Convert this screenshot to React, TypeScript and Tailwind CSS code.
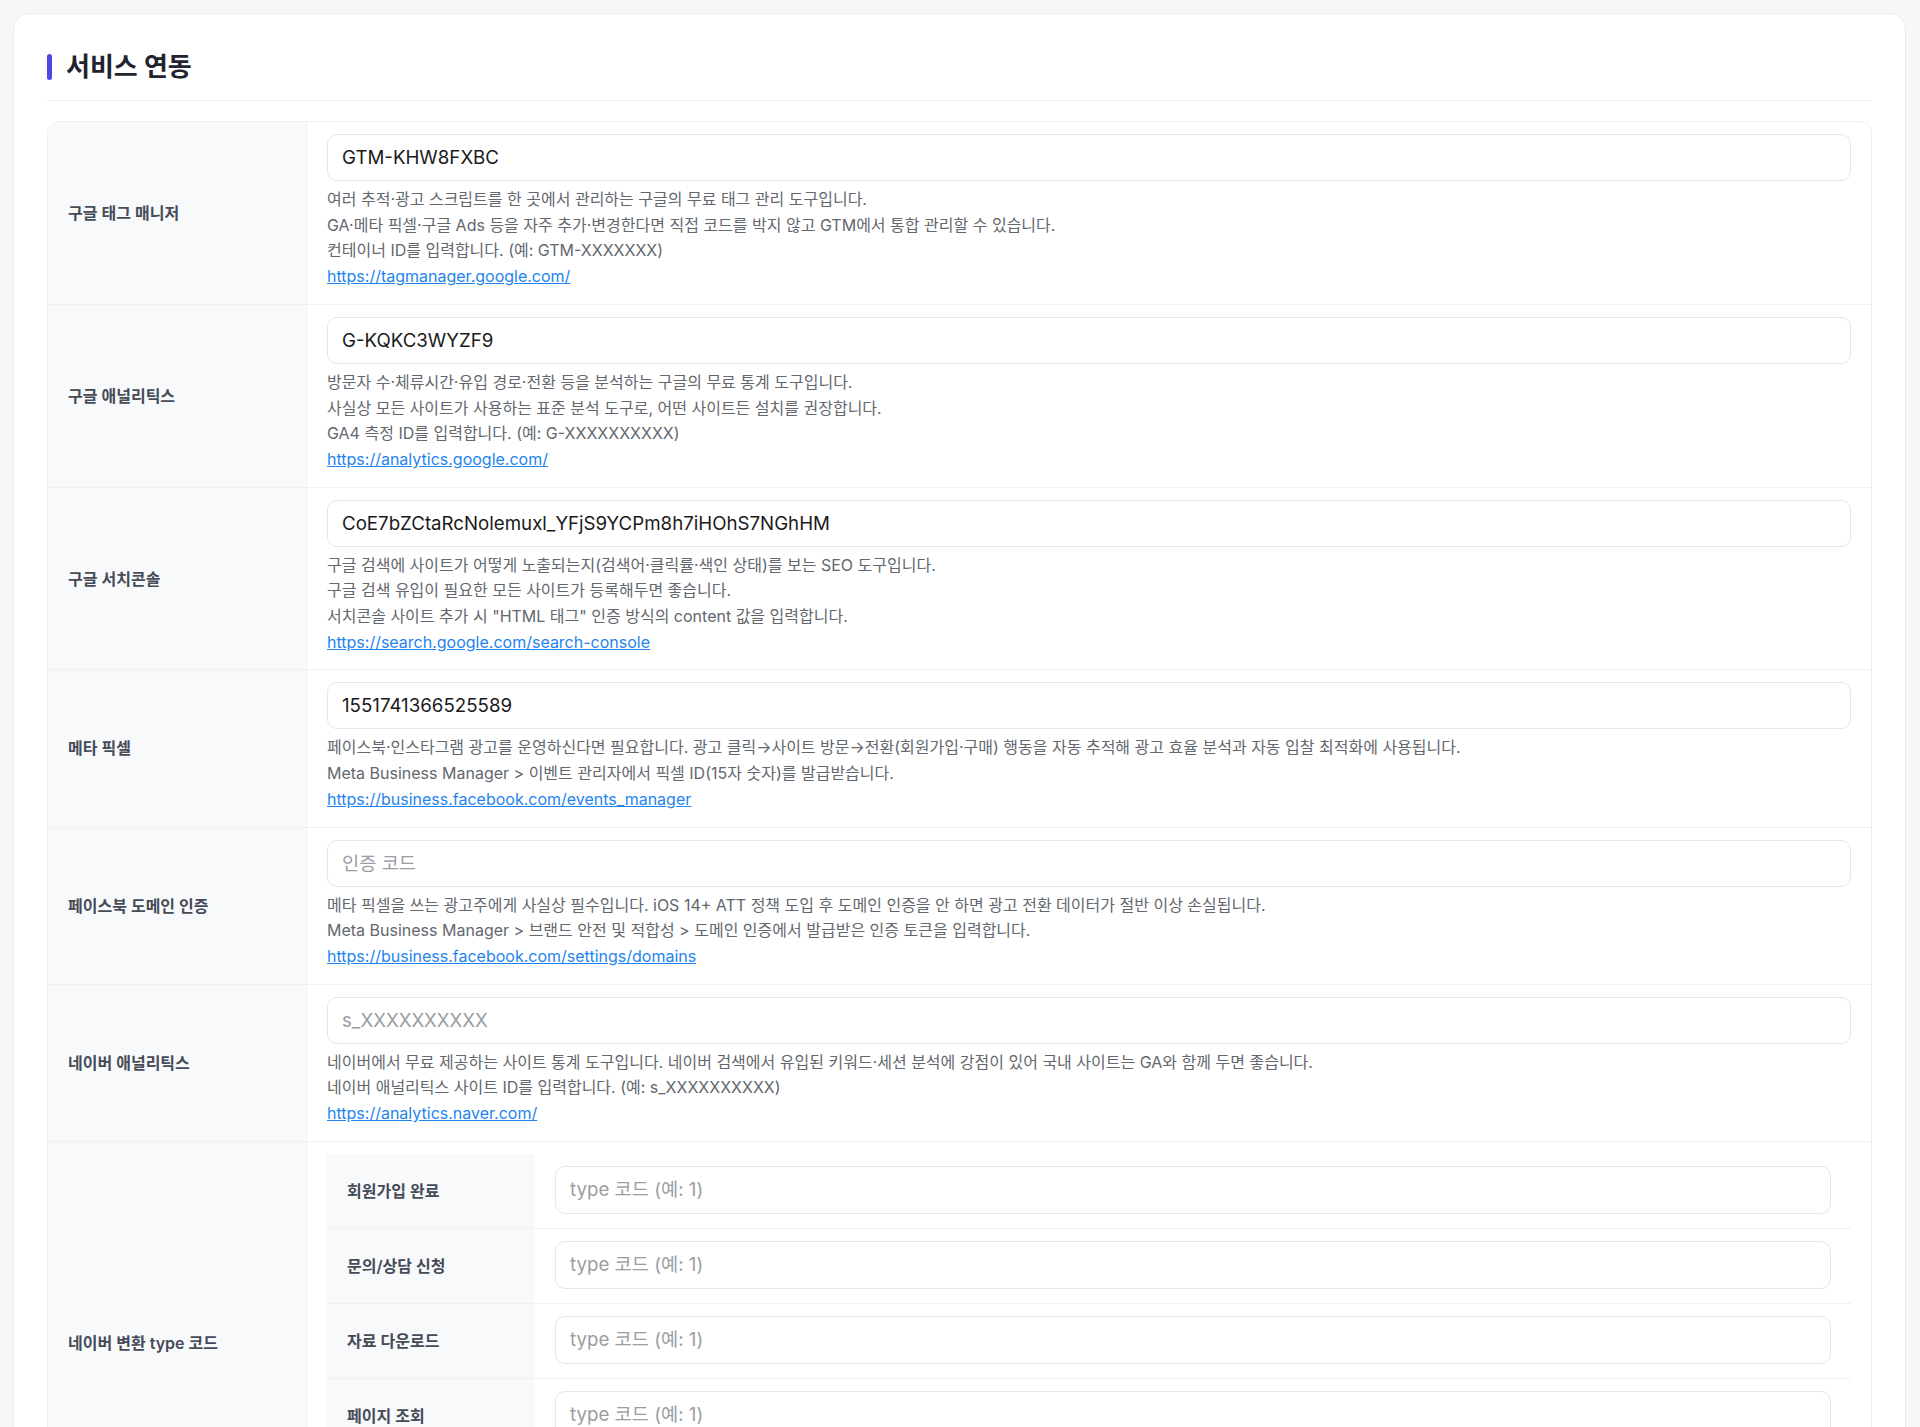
import React from "react";

type Service = {
  label: string;
  value?: string;
  placeholder?: string;
  lines: string[];
  link: string;
};

const services: Service[] = [
  {
    label: "구글 태그 매니저",
    value: "GTM-KHW8FXBC",
    lines: [
      "여러 추적·광고 스크립트를 한 곳에서 관리하는 구글의 무료 태그 관리 도구입니다.",
      "GA·메타 픽셀·구글 Ads 등을 자주 추가·변경한다면 직접 코드를 박지 않고 GTM에서 통합 관리할 수 있습니다.",
      "컨테이너 ID를 입력합니다. (예: GTM-XXXXXXX)",
    ],
    link: "https://tagmanager.google.com/",
  },
  {
    label: "구글 애널리틱스",
    value: "G-KQKC3WYZF9",
    lines: [
      "방문자 수·체류시간·유입 경로·전환 등을 분석하는 구글의 무료 통계 도구입니다.",
      "사실상 모든 사이트가 사용하는 표준 분석 도구로, 어떤 사이트든 설치를 권장합니다.",
      "GA4 측정 ID를 입력합니다. (예: G-XXXXXXXXXX)",
    ],
    link: "https://analytics.google.com/",
  },
  {
    label: "구글 서치콘솔",
    value: "CoE7bZCtaRcNolemuxl_YFjS9YCPm8h7iHOhS7NGhHM",
    lines: [
      "구글 검색에 사이트가 어떻게 노출되는지(검색어·클릭률·색인 상태)를 보는 SEO 도구입니다.",
      "구글 검색 유입이 필요한 모든 사이트가 등록해두면 좋습니다.",
      '서치콘솔 사이트 추가 시 "HTML 태그" 인증 방식의 content 값을 입력합니다.',
    ],
    link: "https://search.google.com/search-console",
  },
  {
    label: "메타 픽셀",
    value: "1551741366525589",
    lines: [
      "페이스북·인스타그램 광고를 운영하신다면 필요합니다. 광고 클릭→사이트 방문→전환(회원가입·구매) 행동을 자동 추적해 광고 효율 분석과 자동 입찰 최적화에 사용됩니다.",
      "Meta Business Manager > 이벤트 관리자에서 픽셀 ID(15자 숫자)를 발급받습니다.",
    ],
    link: "https://business.facebook.com/events_manager",
  },
  {
    label: "페이스북 도메인 인증",
    placeholder: "인증 코드",
    lines: [
      "메타 픽셀을 쓰는 광고주에게 사실상 필수입니다. iOS 14+ ATT 정책 도입 후 도메인 인증을 안 하면 광고 전환 데이터가 절반 이상 손실됩니다.",
      "Meta Business Manager > 브랜드 안전 및 적합성 > 도메인 인증에서 발급받은 인증 토큰을 입력합니다.",
    ],
    link: "https://business.facebook.com/settings/domains",
  },
  {
    label: "네이버 애널리틱스",
    placeholder: "s_XXXXXXXXXX",
    lines: [
      "네이버에서 무료 제공하는 사이트 통계 도구입니다. 네이버 검색에서 유입된 키워드·세션 분석에 강점이 있어 국내 사이트는 GA와 함께 두면 좋습니다.",
      "네이버 애널리틱스 사이트 ID를 입력합니다. (예: s_XXXXXXXXXX)",
    ],
    link: "https://analytics.naver.com/",
  },
];

const conversions = ["회원가입 완료", "문의/상담 신청", "자료 다운로드", "페이지 조회", "구매 완료"];

const font = { fontFamily: 'Inter, "Noto Sans CJK KR", sans-serif' };

function TextInput({ value, placeholder }: { value?: string; placeholder?: string }) {
  return (
    <input
      defaultValue={value}
      placeholder={placeholder}
      className="w-full h-[47px] rounded-[10px] border border-[#e6e6e6] bg-white px-[14px] text-[18.7px] text-[#1a1a1a] placeholder:text-[#9a9da3] outline-none"
    />
  );
}

export default function App() {
  return (
    <div className="min-h-screen bg-[#f7f7f7] pl-[13px] pr-[14px] pt-[13px]" style={font}>
      <div className="rounded-2xl border border-[#ebebeb] bg-white px-[33px] pt-[37px]">
        <div className="flex items-center gap-[14px] border-b border-[#ededed] pb-[17px]">
          <span className="h-[26px] w-[5px] rounded-full bg-[#4f46e5]" />
          <h2 className="text-[26px] leading-[32px] font-bold text-[#1f2430]">서비스 연동</h2>
        </div>

        <div className="mt-5 overflow-hidden rounded-xl border border-[#eeeeee]">
          {services.map((s) => (
            <div key={s.label} className="grid grid-cols-[259px_1fr] border-b border-[#f0f0f0]">
              <div className="flex items-center border-r border-[#f2f2f2] bg-[#f8f9fb] px-5 text-[16px] font-semibold text-[#454b57]">
                {s.label}
              </div>
              <div className="px-5 pt-3 pb-[14px]">
                <TextInput value={s.value} placeholder={s.placeholder} />
                <div className="mt-[6px] text-[16px] leading-[25.7px] text-[#63676e]">
                  {s.lines.map((l) => (
                    <p key={l}>{l}</p>
                  ))}
                  <a href={s.link} className="text-[#1f84ee] underline">
                    {s.link}
                  </a>
                </div>
              </div>
            </div>
          ))}

          <div className="grid grid-cols-[259px_1fr]">
            <div className="flex items-center border-r border-[#f2f2f2] bg-[#f8f9fb] px-5 text-[16px] font-semibold text-[#454b57]">
              네이버 변환 type 코드
            </div>
            <div className="px-5 pt-3 pb-4">
              <div className="flex flex-col">
                {conversions.map((c, i) => (
                  <div
                    key={c}
                    className={`grid grid-cols-[208px_1fr] ${i > 0 ? "border-t border-[#f0f0f0]" : ""}`}
                  >
                    <div className="flex items-center bg-[#f8f9fb] px-5 text-[16px] font-semibold text-[#454b57]">
                      {c}
                    </div>
                    <div className="px-5 pt-3 pb-[14px]">
                      <input
                        placeholder="type 코드 (예: 1)"
                        className="w-full h-[48px] rounded-[10px] border border-[#e6e6e6] bg-white px-[14px] text-[18.7px] text-[#1a1a1a] placeholder:text-[#9a9da3] outline-none"
                      />
                    </div>
                  </div>
                ))}
              </div>
            </div>
          </div>
        </div>
        <div className="h-8" />
      </div>
    </div>
  );
}
